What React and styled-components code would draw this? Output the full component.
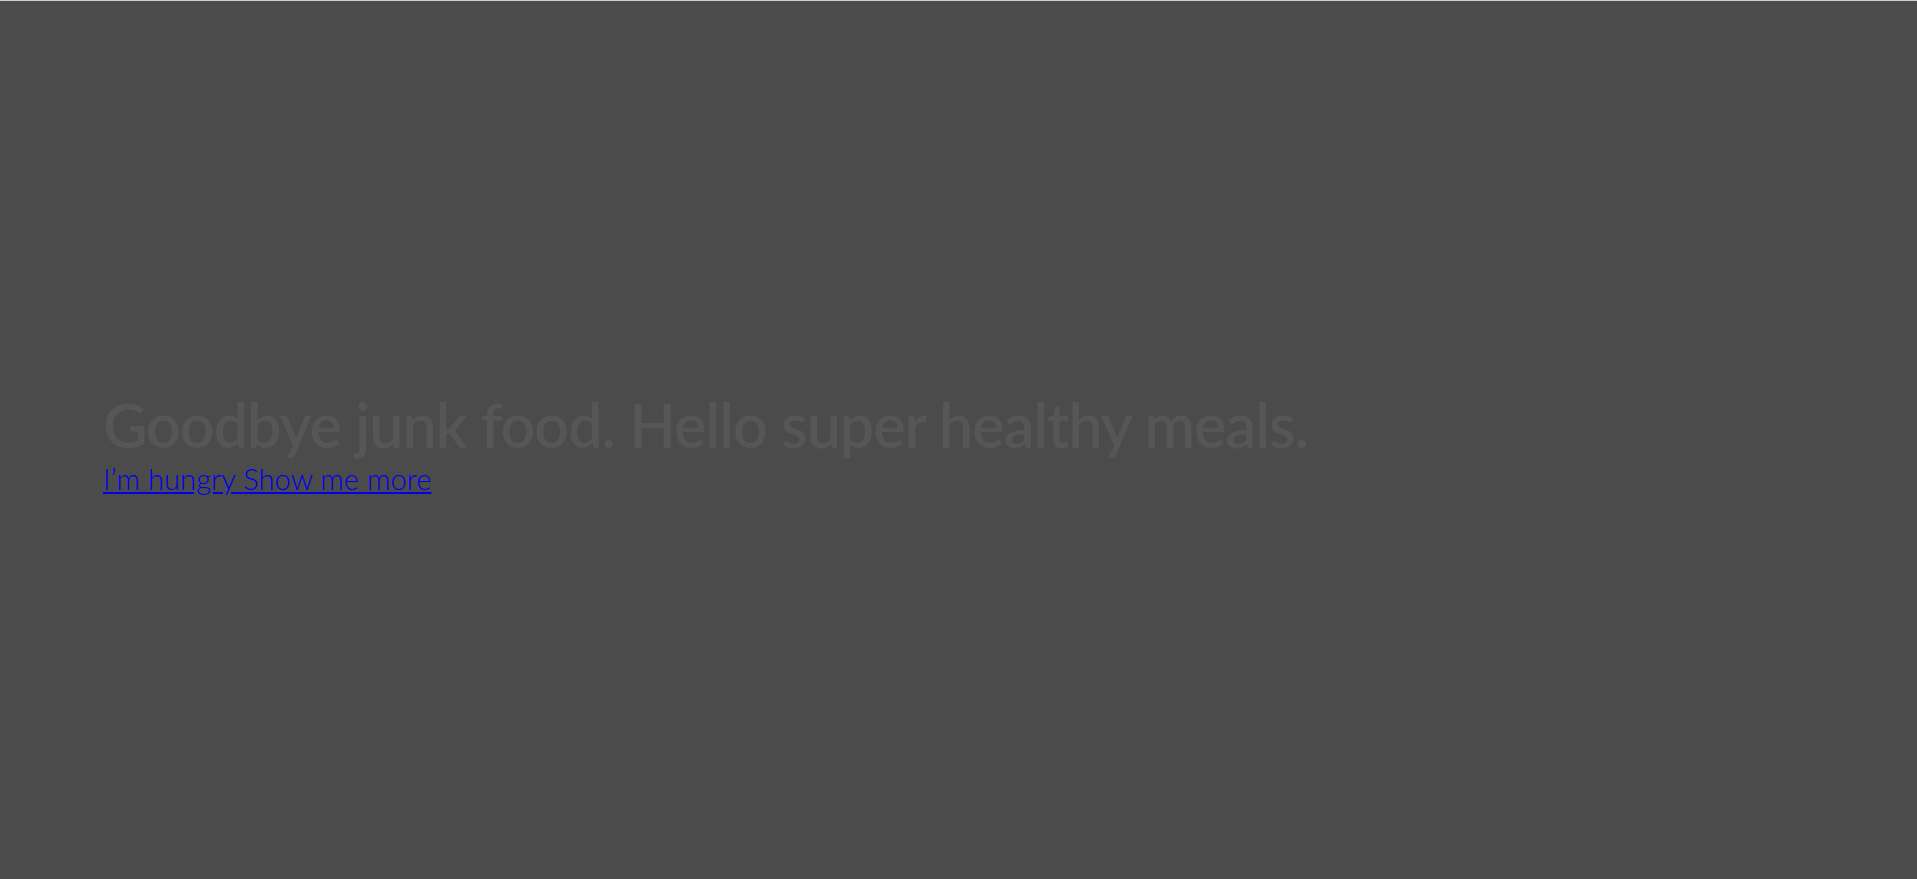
import React from 'react'
import styled, { createGlobalStyle } from 'styled-components'

const GlobalStyle = createGlobalStyle`
  html, body {
    margin: 0;
    padding: 0;
    height: 100%;
    background: #4b4b4b;
  }
  #root {
    height: 100%;
  }
`

const Hero = styled.header`
  box-sizing: border-box;
  height: 100vh;
  border-top: 1px solid #cfcfcf;
  background: #4b4b4b;
  display: flex;
  flex-direction: column;
  justify-content: center;
  padding: 6px 0 0 103px;
  font-family: Lato, 'Open Sans', sans-serif;
`

const Title = styled.h1`
  margin: 0;
  font-family: 'Lato Semibold', Lato, sans-serif;
  font-size: 61px;
  font-weight: 400;
  letter-spacing: -1px;
  line-height: 1.15;
  color: #565656;
`

const Actions = styled.div`
  font-size: 29.2px;
  font-weight: 300;
  line-height: 1.2;
`

const Link = styled.a`
  color: #0000ee;
`

export default function App() {
    return (
        <>
            <GlobalStyle />
            <Hero>
                <Title>Goodbye junk food. Hello super healthy meals.</Title>
                <Actions>
                    <Link href="#">I’m hungry </Link><Link href="#">Show me more</Link>
                </Actions>
            </Hero>
        </>
    )
}
